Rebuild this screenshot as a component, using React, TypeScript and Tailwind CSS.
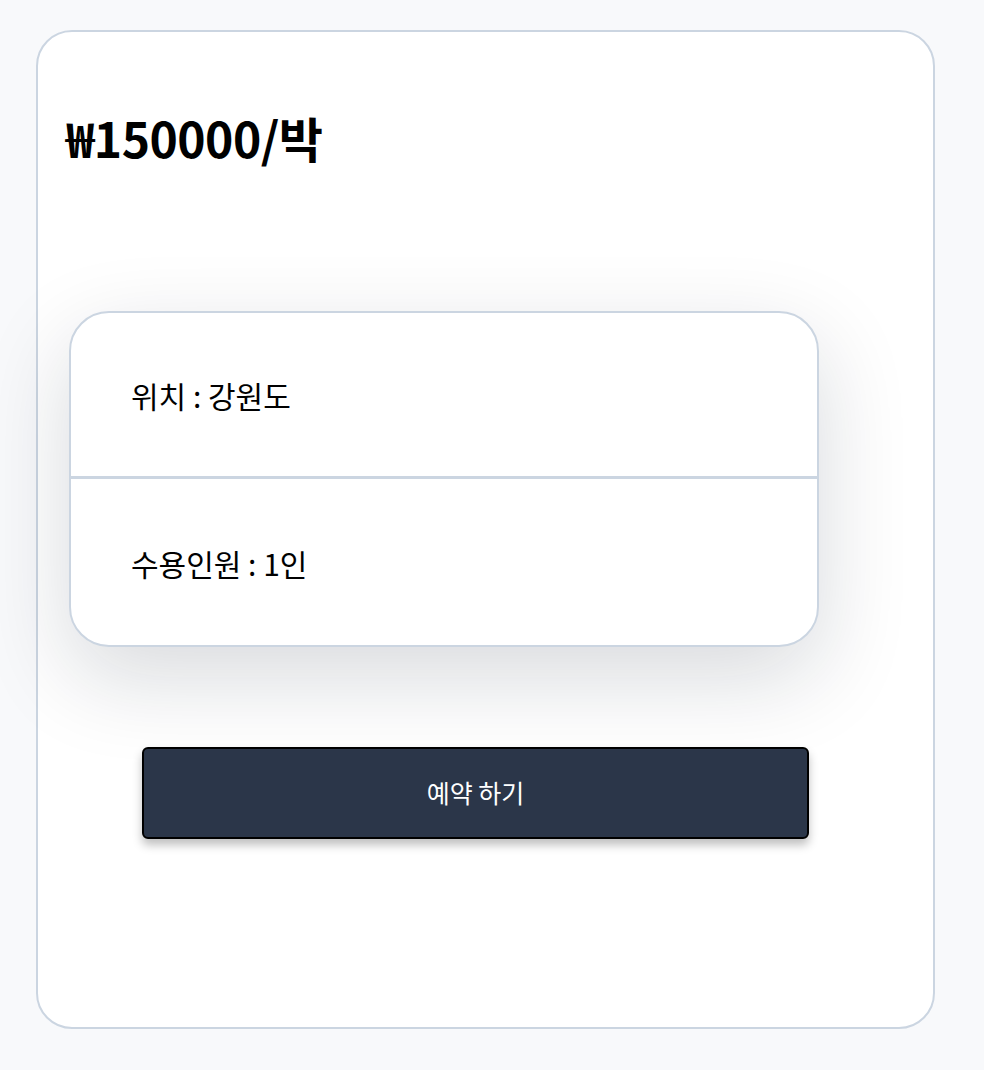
import * as React from "react";

const font = { fontFamily: '"Noto Sans CJK KR", "Noto Sans", sans-serif' };

function InfoRow({ children, last }: { children: React.ReactNode; last?: boolean }) {
  return (
    <div
      className={
        "flex h-[166px] items-center pl-[60px] pt-[2px] text-[30px] text-black " +
        (last ? "" : "border-b-[3px] border-[#cbd5e1]")
      }
    >
      {children}
    </div>
  );
}

export default function App() {
  return (
    <div className="min-h-[1070px] bg-[#f8f9fb] pt-[30px] pl-[36px]" style={font}>
      <div className="flex h-[999px] w-[899px] flex-col rounded-[36px] border-2 border-[#cbd5e1] bg-white">
        <h1 className="mt-[81px] ml-[28px] text-[48px] leading-none font-bold tracking-[-0.5px] text-black">
          ₩150000/박
        </h1>

        <div className="mt-[150px] ml-[31px] w-[750px] overflow-hidden rounded-[40px] border-2 border-[#cbd5e1] bg-white shadow-[0_30px_90px_rgba(15,23,42,0.16)]">
          <InfoRow>위치 : 강원도</InfoRow>
          <InfoRow last>수용인원 : 1인</InfoRow>
        </div>

        <button className="mt-[100px] ml-[104px] flex h-[92px] w-[667px] items-center justify-center rounded-md border-2 border-black bg-[#2b3649] text-[25px] text-white shadow-[0_6px_10px_rgba(0,0,0,0.25)]">
          예약 하기
        </button>
      </div>
    </div>
  );
}
